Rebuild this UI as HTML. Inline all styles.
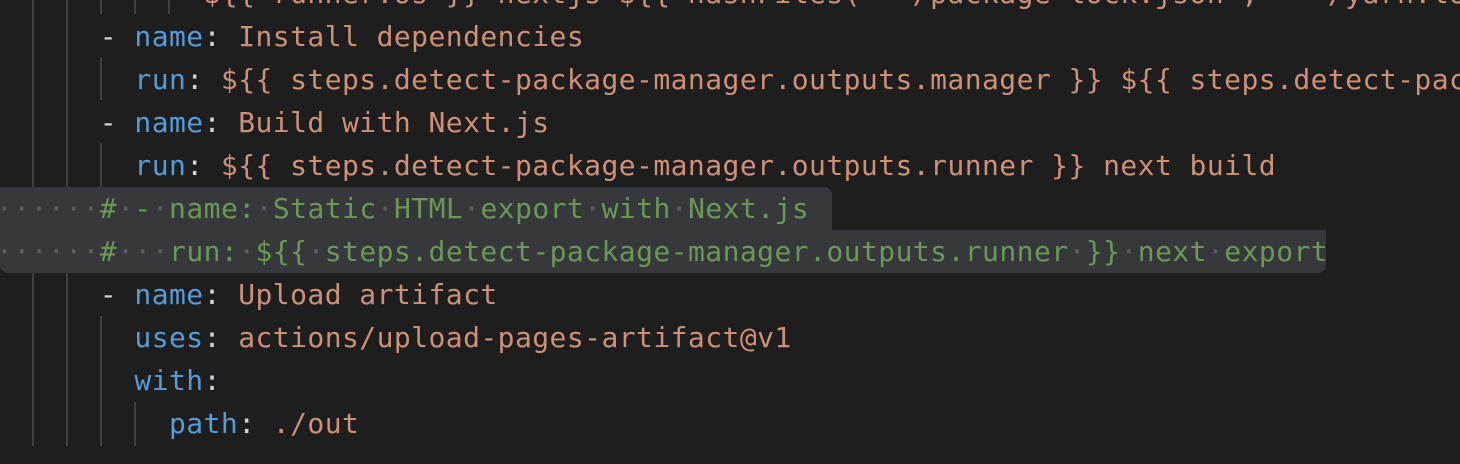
<!DOCTYPE html>
<html><head><style>
html,body{margin:0;padding:0;background:#1e1e1e;width:1460px;height:464px;overflow:hidden}
#w{position:absolute;left:0;top:0;width:1460px;height:464px;overflow:hidden}
.l{position:absolute;left:-4px;height:43px;line-height:43px;font-family:"DejaVu Sans Mono","Liberation Mono",monospace;font-size:28px;letter-spacing:0.44px;white-space:pre;color:#d4d4d4}
.k{color:#569cd6}.s{color:#ce9178}.c{color:#6a9955}.d{color:#5a5c60}
.g{position:absolute;width:2px;background:#404040}
.sel{position:absolute;background:#37383c}
</style></head><body><div id="w">
<div class="sel" style="left:0;top:187px;width:832px;height:43px;border-radius:0 8px 0 0"></div>
<div class="sel" style="left:0;top:230px;width:1326px;height:43px;border-radius:0 0 8px 8px"></div>
<div class="g" style="left:32px;top:0;height:187px"></div>
<div class="g" style="left:66px;top:0;height:187px"></div>
<div class="g" style="left:32px;top:273px;height:173px"></div>
<div class="g" style="left:66px;top:273px;height:173px"></div>
<div class="g" style="left:100px;top:0;height:14px"></div>
<div class="g" style="left:134px;top:0;height:14px"></div>
<div class="g" style="left:168px;top:0;height:14px"></div>
<div class="g" style="left:100px;top:57px;height:43px"></div>
<div class="g" style="left:100px;top:143px;height:44px"></div>
<div class="g" style="left:100px;top:316px;height:130px"></div>
<div class="g" style="left:134px;top:402px;height:44px"></div>

<div class="l" style="top:-28px">            <span class="s">${{ runner.os }}-nextjs-${{ hashFiles('**/package-lock.json', '**/yarn.lock') }}</span></div>
<div class="l" style="top:15px">      - <span class="k">name</span>: <span class="s">Install dependencies</span></div>
<div class="l" style="top:58px">        <span class="k">run</span>: <span class="s">${{ steps.detect-package-manager.outputs.manager }} ${{ steps.detect-package-manager.outputs.command }}</span></div>
<div class="l" style="top:101px">      - <span class="k">name</span>: <span class="s">Build with Next.js</span></div>
<div class="l" style="top:144px">        <span class="k">run</span>: <span class="s">${{ steps.detect-package-manager.outputs.runner }} next build</span></div>
<div class="l" style="top:187px"><span class="d">······</span><span class="c">#</span><span class="d">·</span><span class="c">-</span><span class="d">·</span><span class="c">name:</span><span class="d">·</span><span class="c">Static</span><span class="d">·</span><span class="c">HTML</span><span class="d">·</span><span class="c">export</span><span class="d">·</span><span class="c">with</span><span class="d">·</span><span class="c">Next.js</span></div>
<div class="l" style="top:230px"><span class="d">······</span><span class="c">#</span><span class="d">···</span><span class="c">run:</span><span class="d">·</span><span class="c">${{</span><span class="d">·</span><span class="c">steps.detect-package-manager.outputs.runner</span><span class="d">·</span><span class="c">}}</span><span class="d">·</span><span class="c">next</span><span class="d">·</span><span class="c">export</span></div>
<div class="l" style="top:273px">      - <span class="k">name</span>: <span class="s">Upload artifact</span></div>
<div class="l" style="top:316px">        <span class="k">uses</span>: <span class="s">actions/upload-pages-artifact@v1</span></div>
<div class="l" style="top:359px">        <span class="k">with</span>:</div>
<div class="l" style="top:402px">          <span class="k">path</span>: <span class="s">./out</span></div>
</div></body></html>
